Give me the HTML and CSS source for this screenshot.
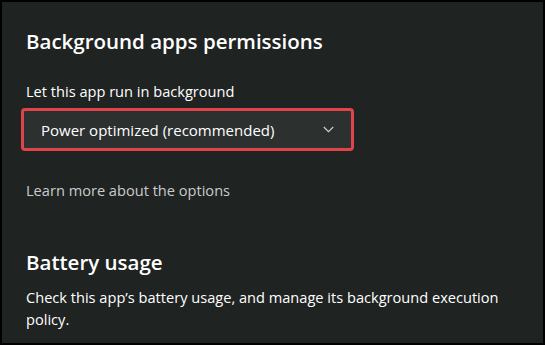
FILE: index.html
```html
<!DOCTYPE html>
<html lang="en">
<head>
    <meta charset="UTF-8">
    <meta name="viewport" content="width=device-width, initial-scale=1.0">
    <title>App settings</title>
    <link rel="stylesheet" href="styles.css">
</head>
<body>
    <div class="panel">
        <section class="section">
            <h2>Background apps permissions</h2>
            <label class="field-label" for="runMode">Let this app run in background</label>
            <div class="dropdown highlighted" id="runMode">
                <span>Power optimized (recommended)</span>
                <svg class="chevron" width="11" height="7" viewBox="0 0 11 7">
                    <path d="M0.8 1l4.7 4.7 4.7-4.7" fill="none" stroke="#d0d0d0" stroke-width="1.2"/>
                </svg>
            </div>
            <a href="#" class="link">Learn more about the options</a>
        </section>

        <section class="section battery">
            <h2>Battery usage</h2>
            <p>Check this app’s battery usage, and manage its background execution policy.</p>
        </section>
    </div>
</body>
</html>
```

FILE: styles.css
```css
* {
    margin: 0;
    padding: 0;
    box-sizing: border-box;
}

html, body {
    height: 100%;
}

body {
    font-family: "Open Sans", "Noto Sans", sans-serif;
    background-color: #000;
    color: #fff;
}

.panel {
    height: 100%;
    border: 2px solid #000;
    background-color: #1f2322;
    padding: 25px 20px 0 24px;
}

.section h2 {
    font-size: 20.5px;
    font-weight: 600;
    line-height: 28px;
}

.field-label {
    display: block;
    margin-top: 26px;
    font-size: 14.6px;
    line-height: 20px;
}

/* Dropdown */
.dropdown {
    display: flex;
    align-items: center;
    justify-content: space-between;
    width: 333px;
    height: 43px;
    margin-top: 7px;
    margin-left: -5px;
    padding: 0 17px 0 17px;
    background-color: #2c302f;
    font-size: 15px;
}

.dropdown.highlighted {
    border: 3px solid #e0444a;
    border-radius: 4px;
}

.link {
    display: block;
    margin-top: 29px;
    font-size: 14.6px;
    line-height: 20px;
    color: #c9cbca;
    text-decoration: none;
}

.battery {
    margin-top: 48px;
}

.battery p {
    margin-top: 10px;
    font-size: 14.6px;
    line-height: 22px;
}
```
